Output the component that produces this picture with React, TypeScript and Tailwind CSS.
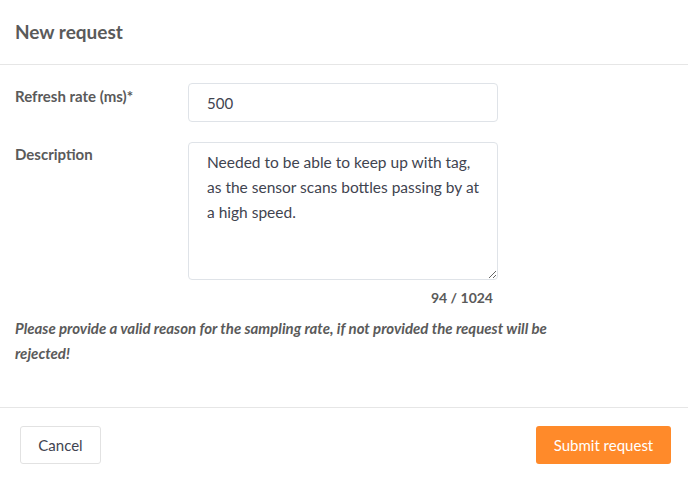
export default function App() {
  return (
    <div
      className="w-[688px] h-[478px] bg-white text-[#555555] flex flex-col"
      style={{ fontFamily: "Lato, 'Open Sans', sans-serif" }}
    >
      <div className="h-[65px] px-[15px] flex items-center border-b border-[#e6e6e6]">
        <h2 className="text-[19px] font-bold text-[#5a5a5a]">New request</h2>
      </div>

      <div className="flex-1 px-[15px] pt-[18px]">
        <div className="flex">
          <label className="w-[173px] pt-[2px] text-[15px] font-bold text-[#5a5a5a]">
            Refresh rate (ms)*
          </label>
          <input
            className="w-[310px] h-[39px] rounded-[4px] border border-[#dfe3e8] px-[18px] text-[15px] text-[#3f4450] outline-none"
            defaultValue="500"
          />
        </div>

        <div className="flex mt-[20px]">
          <label className="w-[173px] pt-[1px] text-[15px] font-bold text-[#5a5a5a]">
            Description
          </label>
          <div className="w-[310px] flex flex-col items-end">
            <textarea
              className="w-[310px] h-[138px] rounded-[4px] border border-[#dfe3e8] pl-[18px] pr-[14px] py-[7px] text-[15.5px] leading-[25px] text-[#3f4450] outline-none"
              defaultValue="Needed to be able to keep up with tag, as the sensor scans bottles passing by at a high speed."
            />
            <span className="mt-[7px] mr-[5px] text-[14px] font-bold text-[#5a5a5a]">94 / 1024</span>
          </div>
        </div>

        <p className="mt-[8px] w-[560px] text-[15px] leading-[25px] font-bold italic text-[#5a5a5a]">
          Please provide a valid reason for the sampling rate, if not provided the request will be rejected!
        </p>
      </div>

      <div className="h-[71px] border-t border-[#e6e6e6] pl-[20px] pr-[17px] pt-[4px] flex items-center justify-between">
        <button className="w-[81px] h-[38px] rounded-[3px] border border-[#e2e2e2] bg-white text-[15px] text-[#3f4450]">
          Cancel
        </button>
        <button className="w-[135px] h-[38px] rounded-[3px] bg-[#ff8a2a] text-[15px] text-white">
          Submit request
        </button>
      </div>
    </div>
  );
}
